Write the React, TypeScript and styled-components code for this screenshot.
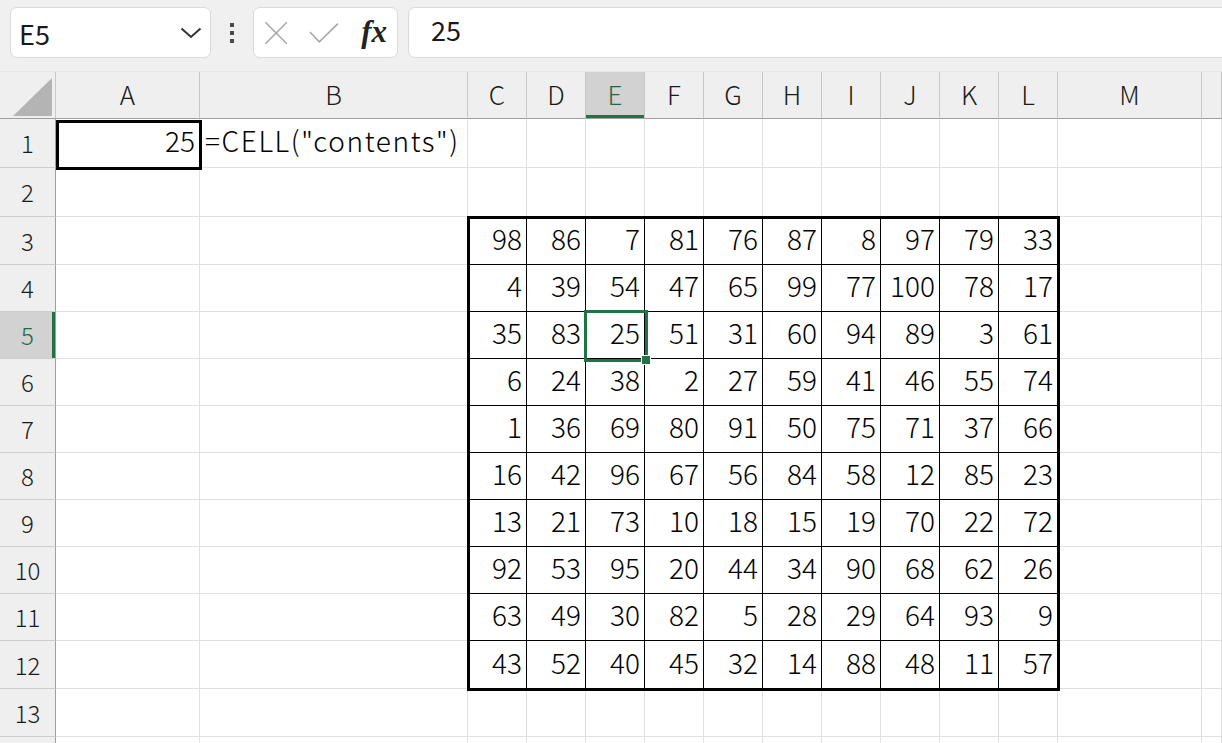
import React from "react";
import styled, { createGlobalStyle } from "styled-components";

const GlobalStyle = createGlobalStyle`
  html, body { margin: 0; padding: 0; }
  body {
    width: 1222px;
    height: 743px;
    overflow: hidden;
    background: #f0f0f0;
    font-family: "Noto Sans CJK JP", "Noto Sans", sans-serif;
  }
`;

const FONT = `"Noto Sans CJK JP", "Noto Sans", sans-serif`;
const GREEN = "#217346";

const COLS = ["A", "B", "C", "D", "E", "F", "G", "H", "I", "J", "K", "L", "M", ""];
const COL_WIDTHS = [56, 144, 268, 59, 59, 59, 59, 59, 59, 59, 59, 59, 59, 144];
const ROW_HEIGHTS = [47, 49, 49, 48, 47, 47, 47, 47, 47, 47, 47, 47, 48, 48, 48];

const DATA: number[][] = [
  [98, 86, 7, 81, 76, 87, 8, 97, 79, 33],
  [4, 39, 54, 47, 65, 99, 77, 100, 78, 17],
  [35, 83, 25, 51, 31, 60, 94, 89, 3, 61],
  [6, 24, 38, 2, 27, 59, 41, 46, 55, 74],
  [1, 36, 69, 80, 91, 50, 75, 71, 37, 66],
  [16, 42, 96, 67, 56, 84, 58, 12, 85, 23],
  [13, 21, 73, 10, 18, 15, 19, 70, 22, 72],
  [92, 53, 95, 20, 44, 34, 90, 68, 62, 26],
  [63, 49, 30, 82, 5, 28, 29, 64, 93, 9],
  [43, 52, 40, 45, 32, 14, 88, 48, 11, 57],
];

const colTemplate = COL_WIDTHS.map((w) => `${w}px`).join(" ") + " 1fr";
const rowTemplate = ROW_HEIGHTS.map((h) => `${h}px`).join(" ");

const Page = styled.div`
  display: flex;
  flex-direction: column;
  width: 1222px;
  height: 743px;
  overflow: hidden;
`;

const Toolbar = styled.div`
  display: flex;
  align-items: flex-start;
  height: 72px;
  padding: 7px 0 0 10px;
  box-sizing: border-box;
  background: #f0f0f0;
  border-bottom: 1px solid #e6e6e6;
  flex-shrink: 0;
`;

const Box = styled.div`
  height: 51px;
  box-sizing: border-box;
  background: #ffffff;
  border: 1px solid #dadada;
  border-radius: 7px;
  display: flex;
  align-items: center;
`;

const NameBox = styled(Box)`
  width: 201px;
  padding: 0 8px 0 8px;
  justify-content: space-between;
`;

const NameText = styled.span`
  font-family: ${FONT};
  font-size: 27px;
  color: #1a1a1a;
  line-height: 1;
  margin-top: 2px;
`;

const DotsWrap = styled.div`
  width: 42px;
  height: 51px;
  display: flex;
  flex-direction: column;
  align-items: center;
  justify-content: center;
  gap: 4px;
`;

const Dot = styled.span`
  width: 4px;
  height: 4px;
  background: #4a4a4a;
`;

const FxBox = styled(Box)`
  width: 145px;
  padding: 0 10px 0 10px;
  gap: 21px;
`;

const FxText = styled.span`
  font-family: "Liberation Serif", "DejaVu Serif", serif;
  font-style: italic;
  font-weight: bold;
  font-size: 31px;
  color: #222;
  line-height: 1;
  margin-left: 1px;
  margin-top: -2px;
`;

const FormulaBox = styled(Box)`
  flex: 1;
  margin-left: 10px;
  margin-right: -10px;
  padding-left: 22px;
  align-items: flex-start;
`;

const FormulaText = styled.span`
  font-family: ${FONT};
  font-size: 27px;
  color: #1a1a1a;
  line-height: 1;
  margin-top: 8px;
`;

const Sheet = styled.div`
  display: grid;
  flex: 1;
  background: #ffffff;
`;

const Layer = styled.div`
  grid-area: 1 / 1;
  display: grid;
  grid-template-columns: ${colTemplate};
  grid-template-rows: ${rowTemplate};
`;

const OverlayLayer = styled(Layer)`
  pointer-events: none;
`;

const Corner = styled.div`
  background: #efefef;
  border-right: 1px solid #c8c8c8;
  border-bottom: 1px solid #9e9e9e;
  box-sizing: border-box;
`;

const ColHeader = styled.div<{ $sel?: boolean }>`
  box-sizing: border-box;
  background: ${(p) => (p.$sel ? "#d2d2d2" : "#efefef")};
  color: ${(p) => (p.$sel ? "#1e6b41" : "#1a1a1a")};
  border-right: 1px solid #c6c6c6;
  border-bottom: 1px solid #9e9e9e;
  box-shadow: ${(p) => (p.$sel ? `inset 0 -3px 0 ${GREEN}` : "none")};
  display: flex;
  align-items: center;
  justify-content: center;
  font-family: ${FONT};
  font-size: 26px;
  font-weight: 300;
  line-height: 1;
  padding-bottom: 2px;
`;

const RowHeader = styled.div<{ $sel?: boolean }>`
  box-sizing: border-box;
  background: ${(p) => (p.$sel ? "#d2d2d2" : "#efefef")};
  color: ${(p) => (p.$sel ? "#1e6b41" : "#1a1a1a")};
  border-right: 1px solid #9e9e9e;
  border-bottom: 1px solid #cdcdcd;
  box-shadow: ${(p) => (p.$sel ? `inset -3px 0 0 ${GREEN}` : "none")};
  display: flex;
  align-items: center;
  justify-content: center;
  font-family: ${FONT};
  font-size: 24px;
  font-weight: 300;
  line-height: 1;
`;

const Cell = styled.div<{ $block?: boolean; $left?: boolean }>`
  box-sizing: border-box;
  border-right: 1px solid ${(p) => (p.$block ? "#000" : "#e1e1e1")};
  border-bottom: 1px solid ${(p) => (p.$block ? "#000" : "#e1e1e1")};
  display: flex;
  align-items: center;
  justify-content: ${(p) => (p.$left ? "flex-start" : "flex-end")};
  padding: 0 4px 6px 5px;
  font-family: ${FONT};
  font-size: 28px;
  font-weight: 300;
  letter-spacing: ${(p) => (p.$left ? "1.6px" : "0")};
  line-height: 1;
  color: #000;
  white-space: nowrap;
  overflow: visible;
`;

const BlockBorder = styled.div`
  grid-column: 4 / 14;
  grid-row: 4 / 14;
  margin: -1px -2px -2px -1px;
  border: 3px solid #000;
`;

const A1Border = styled.div`
  grid-column: 2 / 3;
  grid-row: 2 / 3;
  margin: 1px -2px -2px 0;
  border: 3px solid #000;
`;

const Selection = styled.div`
  grid-column: 6 / 7;
  grid-row: 6 / 7;
  margin: -2px -3px -3px -2px;
  border: 3px solid ${GREEN};
  position: relative;
`;

const FillHandle = styled.div`
  position: absolute;
  right: -6px;
  bottom: -6px;
  width: 8px;
  height: 8px;
  background: ${GREEN};
  border: 1px solid #fff;
`;

const Triangle = () => (
  <svg width="55" height="46" viewBox="0 0 55 46" style={{ display: "block" }}>
    <polygon points="13,44 52,44 52,6" fill="#b4b4b4" />
  </svg>
);

const Chevron = () => (
  <svg width="22" height="12" viewBox="0 0 22 12">
    <polyline points="1.5,1.5 11,10 20.5,1.5" fill="none" stroke="#333" strokeWidth="2" />
  </svg>
);

const Cross = () => (
  <svg width="26" height="26" viewBox="0 0 26 26">
    <line x1="1.5" y1="1.5" x2="24.5" y2="24.5" stroke="#a6a6a6" strokeWidth="1.6" />
    <line x1="24.5" y1="1.5" x2="1.5" y2="24.5" stroke="#a6a6a6" strokeWidth="1.6" />
  </svg>
);

const Check = () => (
  <svg width="32" height="22" viewBox="0 0 32 22">
    <polyline points="1,10 11,20.5 31,1" fill="none" stroke="#a6a6a6" strokeWidth="1.6" />
  </svg>
);

export default function App() {
  const bodyRows = ROW_HEIGHTS.length - 1;
  const rows: React.ReactNode[] = [];
  for (let r = 1; r <= bodyRows; r++) {
    rows.push(
      <RowHeader key={`rh${r}`} $sel={r === 5}>
        {r <= 13 ? r : ""}
      </RowHeader>
    );
    for (let c = 0; c < COLS.length; c++) {
      const inBlock = r >= 3 && r <= 12 && c >= 2 && c <= 11;
      let content: React.ReactNode = "";
      let left = false;
      if (inBlock) content = DATA[r - 3][c - 2];
      if (r === 1 && c === 0) content = 25;
      if (r === 1 && c === 1) {
        content = '=CELL("contents")';
        left = true;
      }
      rows.push(
        <Cell key={`c${r}-${c}`} $block={inBlock} $left={left}>
          {content}
        </Cell>
      );
    }
  }

  return (
    <>
      <GlobalStyle />
      <Page>
        <Toolbar>
          <NameBox>
            <NameText>E5</NameText>
            <Chevron />
          </NameBox>
          <DotsWrap>
            <Dot />
            <Dot />
            <Dot />
          </DotsWrap>
          <FxBox>
            <Cross />
            <Check />
            <FxText>fx</FxText>
          </FxBox>
          <FormulaBox>
            <FormulaText>25</FormulaText>
          </FormulaBox>
        </Toolbar>
        <Sheet>
          <Layer>
            <Corner>
              <Triangle />
            </Corner>
            {COLS.map((c, i) => (
              <ColHeader key={`ch${i}`} $sel={c === "E"}>
                {c}
              </ColHeader>
            ))}
            {rows}
          </Layer>
          <OverlayLayer>
            <A1Border />
            <BlockBorder />
            <Selection>
              <FillHandle />
            </Selection>
          </OverlayLayer>
        </Sheet>
      </Page>
    </>
  );
}
